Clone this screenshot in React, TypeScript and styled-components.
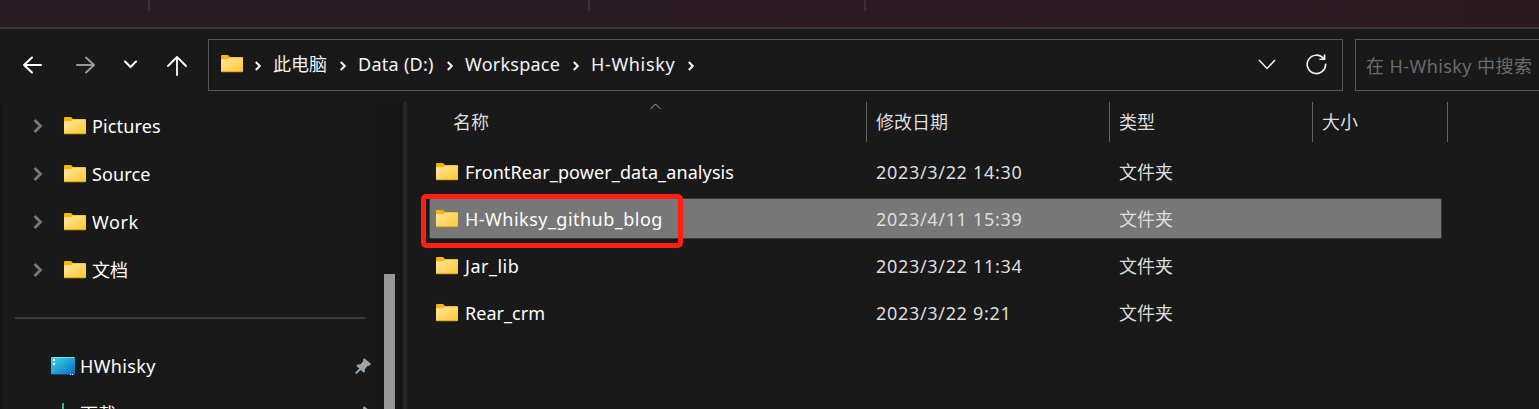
import React from "react";
import styled, { createGlobalStyle } from "styled-components";

const GlobalStyle = createGlobalStyle`
  html, body { margin: 0; background: #191919; overflow: hidden; }
  body {
    font-family: "Noto Sans", "Noto Sans CJK SC", sans-serif;
    font-size: 18px;
    line-height: 24px;
    color: #fff;
  }
  *, *::before, *::after { box-sizing: border-box; }
  svg { display: block; flex: none; }
`;

const Window = styled.div`
  width: 1539px;
  height: 409px;
  display: flex;
  flex-direction: column;
  overflow: hidden;
  background: #191919;
`;

const CommandBar = styled.div`
  height: 29px;
  flex: none;
  display: flex;
  padding-left: 148px;
  border-bottom: 2px solid #393738;
  background: linear-gradient(90deg, #271c24 0%, #281b24 35%, #2b1a23 55%, #2a1b22 85%, #2b181e 100%) padding-box;
`;

const CommandDivider = styled.div<{ $gap: number }>`
  width: 2px;
  height: 11px;
  margin-right: ${(p) => p.$gap}px;
  background: #3c3038;
`;

const NavBar = styled.div`
  height: 73px;
  flex: none;
  display: flex;
  align-items: flex-start;
  padding-top: 10px;
`;

const NavButtons = styled.div`
  width: 208px;
  height: 52px;
  flex: none;
  display: flex;
  align-items: center;
  padding: 0 0 1px 22px;
`;

const NavIcon = styled.div<{ $width: number; $gap: number }>`
  width: ${(p) => p.$width}px;
  margin-right: ${(p) => p.$gap}px;
`;

const AddressBar = styled.div`
  width: 1135px;
  height: 52px;
  flex: none;
  display: flex;
  align-items: center;
  padding: 0 15px 2px 12px;
  border: 1px solid #555;
`;

const Crumb = styled.div<{ $width: number; $spacing?: number }>`
  width: ${(p) => p.$width}px;
  flex: none;
  display: flex;
  align-items: center;
  white-space: nowrap;
  letter-spacing: ${(p) => p.$spacing ?? 0}px;
  color: #f4f4f4;
`;

const CrumbArrow = styled.div<{ $gap: number }>`
  width: 7px;
  flex: none;
  padding-top: 3px;
  margin-right: ${(p) => p.$gap}px;
`;

const AddressActions = styled.div`
  margin-left: auto;
  display: flex;
  align-items: center;
  gap: 30px;
`;

const SearchBox = styled.div`
  width: 200px;
  height: 52px;
  flex: none;
  display: flex;
  align-items: center;
  margin-left: 12px;
  padding: 1px 0 0 10px;
  border: 1px solid #555;
  color: #6b6b6b;
  letter-spacing: 0.42px;
  white-space: nowrap;
`;

const Body = styled.div`
  flex: 1;
  min-height: 0;
  display: flex;
`;

const Sidebar = styled.div`
  width: 376px;
  flex: none;
  border-left: 3px solid #141414;
`;

const TreeRow = styled.div`
  height: 48px;
  display: flex;
  align-items: center;
  padding-left: 30px;
`;

const TreeArrow = styled.div`
  width: 31px;
`;

const Label = styled.span<{ $spacing?: number; $gap?: number }>`
  margin-left: ${(p) => p.$gap ?? 6}px;
  white-space: nowrap;
  letter-spacing: ${(p) => p.$spacing ?? 0}px;
`;

const Separator = styled.div`
  height: 48px;
  display: flex;
  align-items: center;
  padding: 0 11px 0 12px;
  &::before { content: ""; flex: 1; height: 2px; background: #393939; }
`;

const QuickRow = styled.div`
  height: 48px;
  display: flex;
  align-items: center;
  padding: 0 5px 0 48px;
`;

const QuickLabel = styled.span<{ $spacing?: number }>`
  flex: 1;
  margin-left: 5px;
  letter-spacing: ${(p) => p.$spacing ?? 0}px;
`;

const ScrollTrack = styled.div`
  width: 27px;
  flex: none;
  padding: 172px 8px 0;
  background: #171717;
`;

const ScrollThumb = styled.div`
  height: 100%;
  background: #979797;
`;

const Splitter = styled.div`
  width: 5px;
  flex: none;
  border: solid #1f1f1f;
  border-width: 0 2px 0 1px;
  background: #2b2b2b;
`;

const FileList = styled.div`
  flex: 1;
`;

const HeaderRow = styled.div`
  height: 40px;
  display: grid;
  grid-template-columns: 459px 243px 203px 135px;
  margin-bottom: 9px;
`;

const HeaderCell = styled.div<{ $indent: number }>`
  position: relative;
  display: flex;
  align-items: center;
  padding-left: ${(p) => p.$indent}px;
  border-right: 1px solid #636363;
  color: #dedede;
`;

const SortMark = styled.div`
  position: absolute;
  left: 242px;
  top: 1px;
`;

const FileRow = styled.div<{ $selected?: boolean }>`
  position: relative;
  width: 1013px;
  height: 41px;
  display: grid;
  grid-template-columns: 437px 243px 203px 128px;
  align-items: center;
  margin: 0 0 6px 21px;
  border: 1px solid ${(p) => (p.$selected ? "#3a3a3a" : "transparent")};
  border-radius: 2px;
  background: ${(p) => (p.$selected ? "#777" : "transparent")};
`;

const NameCell = styled.div`
  display: flex;
  align-items: center;
  padding-left: 6px;
`;

const DetailCell = styled.div<{ $spacing?: number }>`
  padding-left: 9px;
  color: #dedede;
  letter-spacing: ${(p) => p.$spacing ?? 0}px;
`;

const Highlight = styled.div`
  position: absolute;
  left: -9px;
  top: -5px;
  width: 262px;
  height: 54px;
  border: 5px solid #ff2013;
  border-radius: 5px;
`;

function FolderIcon() {
  return (
    <svg width="22" height="18" viewBox="0 0 22 18">
      <defs>
        <linearGradient id="folderFace" x1="0" y1="0" x2="1" y2="1">
          <stop offset="0" stopColor="#ffe8a0" />
          <stop offset="1" stopColor="#ffc730" />
        </linearGradient>
      </defs>
      <path d="M0 1Q0 0 1 0H6.6Q7.4 0 8 1L9 2H21Q22 2 22 3V10H0Z" fill="#f8b318" />
      <path d="M0 4.2H7L9 2.8H22V17H0Z" fill="url(#folderFace)" />
      <path d="M0 16.2H22V16.6Q22 17.2 21 17.2H1Q0 17.2 0 16.6Z" fill="#e0a01f" />
    </svg>
  );
}

function Chevron() {
  return (
    <svg width="7" height="10" viewBox="0 0 7 10" fill="none" stroke="#f4f4f4" strokeWidth="2">
      <path d="M0.8 1L4.8 5L0.8 9" />
    </svg>
  );
}

function TreeChevron() {
  return (
    <svg width="10" height="14" viewBox="0 0 10 14" fill="none" stroke="#777" strokeWidth="2.8">
      <path d="M1.5 1L7.5 7L1.5 13" />
    </svg>
  );
}

function PinIcon() {
  return (
    <svg width="16" height="16" viewBox="0 0 16 16" fill="#98a3ab">
      <path d="M9.2 0.3L15.7 5.5Q15.9 7 14.6 7.5L12.2 8.3L9.8 11.2L9.9 14.1Q8.9 15 8 14.2L5.8 11.9L1.7 15.7L0.3 15.8L0.5 14.3L4.3 10.6L1.7 8.2Q1.3 7.2 2.3 6.6L5.6 6.2L8 3.5L8.2 1.1Z" />
    </svg>
  );
}

function DesktopIcon() {
  return (
    <svg width="24" height="18" viewBox="0 0 24 18">
      <defs>
        <linearGradient id="desktopFace" x1="0" y1="0" x2="1" y2="1">
          <stop offset="0" stopColor="#35dff0" />
          <stop offset="1" stopColor="#0b66ba" />
        </linearGradient>
      </defs>
      <rect width="24" height="18" rx="1" fill="url(#desktopFace)" />
      <path d="M1 0.5H23" stroke="#7edcec" />
      <path d="M0 17H24V17.4Q24 18 23 18H1Q0 18 0 17.4Z" fill="#0b4774" />
      <path d="M2 2H4V4H2ZM2 6H4V8H2ZM19 17H20V18H19ZM21 17H22V18H21Z" fill="#fff" />
    </svg>
  );
}

function DownloadIcon() {
  return (
    <svg width="24" height="22" viewBox="0 0 24 22" fill="none" stroke="#2dbd84" strokeWidth="2">
      <path d="M12 0V15M5 9L12 16L19 9M4 21H20" />
    </svg>
  );
}

const folders = [
  { name: "Pictures", spacing: 0.14 },
  { name: "Source", spacing: 0.15 },
  { name: "Work", spacing: 0.6 },
  { name: "文档", spacing: 0 },
];

const files = [
  { name: "FrontRear_power_data_analysis", date: "2023/3/22 14:30", spacing: 0.11 },
  { name: "H-Whiksy_github_blog", date: "2023/4/11 15:39", spacing: 0.48, selected: true },
  { name: "Jar_lib", date: "2023/3/22 11:34", spacing: 0.5 },
  { name: "Rear_crm", date: "2023/3/22 9:21", spacing: 0.03 },
];

export default function App() {
  return (
    <Window>
      <GlobalStyle />
      <CommandBar>
        <CommandDivider $gap={438} />
        <CommandDivider $gap={274} />
        <CommandDivider $gap={0} />
      </CommandBar>
      <NavBar>
        <NavButtons>
          <NavIcon $width={20} $gap={34}>
            <svg width="20" height="18" viewBox="0 0 20 18" fill="none" stroke="#fff" strokeWidth="2" strokeLinecap="round" strokeLinejoin="round">
              <path d="M10 1.5L2 9L10 16.5M2 9H19" />
            </svg>
          </NavIcon>
          <NavIcon $width={20} $gap={28}>
            <svg width="20" height="18" viewBox="0 0 20 18" fill="none" stroke="#999" strokeWidth="2" strokeLinecap="round" strokeLinejoin="round">
              <path d="M10 1.5L18 9L10 16.5M18 9H1" />
            </svg>
          </NavIcon>
          <NavIcon $width={14} $gap={29}>
            <svg width="14" height="9" viewBox="0 0 14 9" fill="none" stroke="#fff" strokeWidth="2" strokeLinecap="round">
              <path d="M1 1.5L6.5 7L12 1.5" />
            </svg>
          </NavIcon>
          <NavIcon $width={20} $gap={0}>
            <svg width="20" height="22" viewBox="0 0 20 22" fill="none" stroke="#fff" strokeWidth="1.8" strokeLinecap="round" strokeLinejoin="round">
              <path d="M1 12L10 3L19 12M10 3V21" />
            </svg>
          </NavIcon>
        </NavButtons>
        <AddressBar>
          <Crumb $width={34}><FolderIcon /></Crumb>
          <CrumbArrow $gap={11}><Chevron /></CrumbArrow>
          <Crumb $width={67}>此电脑</Crumb>
          <CrumbArrow $gap={11}><Chevron /></CrumbArrow>
          <Crumb $width={89} $spacing={0.28}>Data (D:)</Crumb>
          <CrumbArrow $gap={11}><Chevron /></CrumbArrow>
          <Crumb $width={108} $spacing={0.25}>Workspace</Crumb>
          <CrumbArrow $gap={11}><Chevron /></CrumbArrow>
          <Crumb $width={97} $spacing={0.65}>H-Whisky</Crumb>
          <CrumbArrow $gap={0}><Chevron /></CrumbArrow>
          <AddressActions>
            <svg width="18" height="11" viewBox="0 0 18 11" fill="none" stroke="#f4f4f4" strokeWidth="1.5">
              <path d="M1 1L9 9.5L17 1" />
            </svg>
            <svg width="21" height="21" viewBox="0 0 21 21" fill="none" stroke="#f4f4f4" strokeWidth="1.6">
              <path d="M17.6 4.6A9.2 9.2 0 1 0 19.6 9.6M18.6 0.5V5.2H13.4" />
            </svg>
          </AddressActions>
        </AddressBar>
        <SearchBox>在 H-Whisky 中搜索</SearchBox>
      </NavBar>
      <Body>
        <Sidebar>
          {folders.map((f) => (
            <TreeRow key={f.name}>
              <TreeArrow><TreeChevron /></TreeArrow>
              <FolderIcon />
              <Label $spacing={f.spacing}>{f.name}</Label>
            </TreeRow>
          ))}
          <Separator />
          <QuickRow>
            <DesktopIcon />
            <QuickLabel $spacing={0.35}>HWhisky</QuickLabel>
            <PinIcon />
          </QuickRow>
          <QuickRow>
            <DownloadIcon />
            <QuickLabel>下载</QuickLabel>
            <PinIcon />
          </QuickRow>
        </Sidebar>
        <ScrollTrack><ScrollThumb /></ScrollTrack>
        <Splitter />
        <FileList>
          <HeaderRow>
            <HeaderCell $indent={45}>
              名称
              <SortMark>
                <svg width="11" height="7" viewBox="0 0 11 7" fill="none" stroke="#aaa">
                  <path d="M0.5 6L5.5 1L10.5 6" />
                </svg>
              </SortMark>
            </HeaderCell>
            <HeaderCell $indent={9}>修改日期</HeaderCell>
            <HeaderCell $indent={9}>类型</HeaderCell>
            <HeaderCell $indent={9}>大小</HeaderCell>
          </HeaderRow>
          {files.map((f) => (
            <FileRow key={f.name} $selected={f.selected}>
              <NameCell>
                <FolderIcon />
                <Label $gap={7} $spacing={f.spacing}>{f.name}</Label>
              </NameCell>
              <DetailCell $spacing={0.68}>{f.date}</DetailCell>
              <DetailCell>文件夹</DetailCell>
              {f.selected && <Highlight />}
            </FileRow>
          ))}
        </FileList>
      </Body>
    </Window>
  );
}
